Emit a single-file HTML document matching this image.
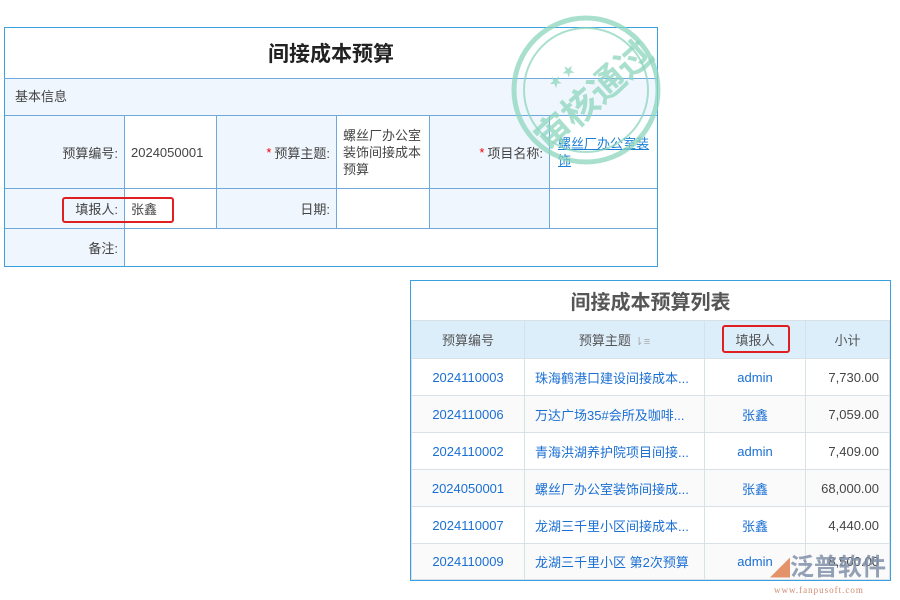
<!DOCTYPE html>
<html><head><meta charset="utf-8"><style>
*{margin:0;padding:0;box-sizing:border-box}
body{width:900px;height:600px;background:#fff;position:relative;overflow:hidden;font-family:"Liberation Sans","Noto Sans CJK SC",sans-serif;font-size:13px;color:#444}
.a{position:absolute}
.c{position:absolute;display:flex;align-items:center;border-right:1px solid #6fa8dc;border-bottom:1px solid #6fa8dc}
.lb{background:#f0f6fd;justify-content:flex-end;padding-right:6px}
.v{padding-left:6px}
.r{color:#e00;margin-right:3px}
.t td{border:1px solid #d8e0e8;padding:0}
</style></head><body>
<div class="a" style="left:4px;top:27px;width:654px;height:240px;border:1px solid #3aa0e0"></div>
<div class="a" style="left:4px;top:27px;width:654px;height:52px;border-bottom:1px solid #6fa8dc;display:flex;align-items:center;justify-content:center;font-size:21px;font-weight:bold;color:#222">间接成本预算</div>
<div class="a" style="left:5px;top:79px;width:652px;height:37px;background:#f0f6fd;border-bottom:1px solid #6fa8dc;padding-left:10px;line-height:36px">基本信息</div>
<div class="c lb" style="left:5px;top:116px;width:120px;height:73px">预算编号:</div>
<div class="c v" style="left:125px;top:116px;width:92px;height:73px">2024050001</div>
<div class="c lb" style="left:217px;top:116px;width:120px;height:73px"><span class="r">*</span>预算主题:</div>
<div class="c v" style="left:337px;top:116px;width:93px;height:73px;line-height:17px">螺丝厂办公室装饰间接成本预算</div>
<div class="c lb" style="left:430px;top:116px;width:120px;height:73px"><span class="r">*</span>项目名称:</div>
<div class="c v" style="left:550px;top:116px;width:107px;height:73px;border-right:none;color:#1a7fd4;text-decoration:underline;line-height:17px;padding-left:8px">螺丝厂办公室装饰</div>
<div class="c lb" style="left:5px;top:189px;width:120px;height:40px">填报人:</div>
<div class="c v" style="left:125px;top:189px;width:92px;height:40px">张鑫</div>
<div class="c lb" style="left:217px;top:189px;width:120px;height:40px">日期:</div>
<div class="c" style="left:337px;top:189px;width:93px;height:40px"></div>
<div class="c lb" style="left:430px;top:189px;width:120px;height:40px"></div>
<div class="c" style="left:550px;top:189px;width:107px;height:40px;border-right:none"></div>
<div class="c lb" style="left:5px;top:229px;width:120px;height:37px;border-bottom:none">备注:</div>
<div class="a" style="left:62px;top:197px;width:112px;height:26px;border:2px solid #e02020;border-radius:3px"></div>
<svg class="a" style="left:508px;top:14px" width="160" height="160" viewBox="0 0 160 160">
<g fill="none" stroke="#8dd6bd" opacity="0.75">
<circle cx="78" cy="76" r="72" stroke-width="5"/><circle cx="78" cy="76" r="62" stroke-width="2"/></g>
<text x="80" y="98" transform="rotate(-42 78 76)" text-anchor="middle" font-size="36" font-weight="bold" fill="#8dd6bd" opacity="0.75" font-family="Noto Sans CJK SC,sans-serif">审核通过</text>
<text x="40" y="70" font-size="13" fill="#8dd6bd" opacity="0.75" transform="rotate(-40 50 65)">★ ★</text>
</svg>

<div class="a" style="left:410px;top:280px;width:481px;height:301px;border:1px solid #3aa0e0;background:#fff"></div>
<div class="a" style="left:410px;top:280px;width:481px;height:41px;display:flex;align-items:center;justify-content:center;font-size:20px;font-weight:bold;color:#555">间接成本预算列表</div>
<table class="a t" style="left:411px;top:320px;width:479px;border-collapse:collapse;text-align:center;font-size:13px">
<tr style="height:38px;background:#ddeefb;color:#555"><td style="width:113px">预算编号</td><td style="width:180px">预算主题 <span style="color:#aaa;font-size:11px">⇂≡</span></td><td style="width:101px">填报人</td><td>小计</td></tr>
<tr style="height:37px"><td style="color:#1a6fd4">2024110003</td><td style="color:#1a6fd4;text-align:left;padding-left:10px">珠海鹤港口建设间接成本...</td><td style="color:#1a6fd4">admin</td><td style="text-align:right;padding-right:10px">7,730.00</td></tr>
<tr style="height:37px;background:#fafafa"><td style="color:#1a6fd4">2024110006</td><td style="color:#1a6fd4;text-align:left;padding-left:10px">万达广场35#会所及咖啡...</td><td style="color:#1a6fd4">张鑫</td><td style="text-align:right;padding-right:10px">7,059.00</td></tr>
<tr style="height:37px"><td style="color:#1a6fd4">2024110002</td><td style="color:#1a6fd4;text-align:left;padding-left:10px">青海洪湖养护院项目间接...</td><td style="color:#1a6fd4">admin</td><td style="text-align:right;padding-right:10px">7,409.00</td></tr>
<tr style="height:37px;background:#fafafa"><td style="color:#1a6fd4">2024050001</td><td style="color:#1a6fd4;text-align:left;padding-left:10px">螺丝厂办公室装饰间接成...</td><td style="color:#1a6fd4">张鑫</td><td style="text-align:right;padding-right:10px">68,000.00</td></tr>
<tr style="height:37px"><td style="color:#1a6fd4">2024110007</td><td style="color:#1a6fd4;text-align:left;padding-left:10px">龙湖三千里小区间接成本...</td><td style="color:#1a6fd4">张鑫</td><td style="text-align:right;padding-right:10px">4,440.00</td></tr>
<tr style="height:36px;background:#fafafa"><td style="color:#1a6fd4">2024110009</td><td style="color:#1a6fd4;text-align:left;padding-left:10px">龙湖三千里小区 第2次预算</td><td style="color:#1a6fd4">admin</td><td style="text-align:right;padding-right:10px">8,500.00</td></tr>
</table>
<div class="a" style="left:722px;top:325px;width:68px;height:28px;border:2px solid #e02020;border-radius:3px"></div>
<div class="a" style="left:770px;top:553px;font-size:24px;line-height:30px;color:#8090a8;opacity:0.85;font-weight:bold;white-space:nowrap"><span style="color:#e08050;font-size:20px">◢</span>泛普软件</div>
<div class="a" style="left:774px;top:585px;font-size:9px;line-height:10px;color:#d08a70;font-family:'Liberation Serif',serif;letter-spacing:1px;white-space:nowrap">www.fanpusoft.com</div>
</body></html>
